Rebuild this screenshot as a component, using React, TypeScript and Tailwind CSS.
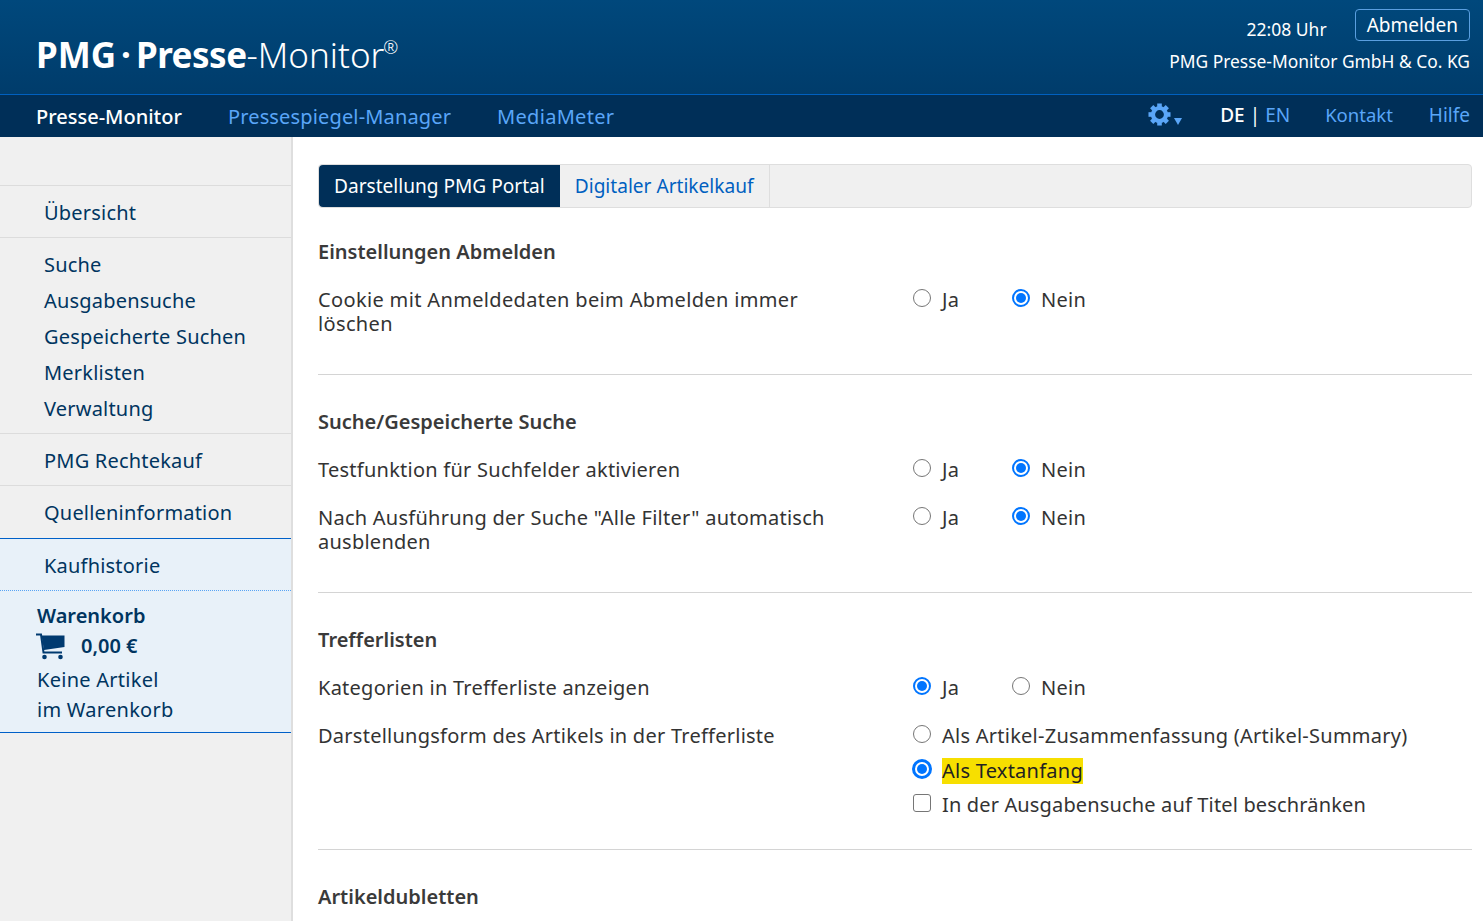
import React from 'react';

const Radio = ({ checked, focus, label, className = '' }: { checked?: boolean; focus?: boolean; label: React.ReactNode; className?: string }) => (
  <label className={`flex items-center gap-[11px] ${className}`}>
    <span
      className={`w-[18px] h-[18px] rounded-full bg-white flex items-center justify-center shrink-0 -mt-[5px] ${
        checked ? 'border-2 border-[#0075ff]' : 'border-[1.5px] border-[#767676]'
      } ${focus ? 'ring-1 ring-[#0075ff]' : ''}`}
    >
      {checked && <span className="block w-[10px] h-[10px] rounded-full bg-[#0075ff]" />}
    </span>
    <span className="tracking-[0.25px]">{label}</span>
  </label>
);

const YesNo = ({ yes }: { yes?: boolean }) => (
  <div className="flex">
    <Radio checked={yes} label="Ja" className="w-[99px]" />
    <Radio checked={!yes} label="Nein" />
  </div>
);

const Row = ({ label, children }: { label: React.ReactNode; children: React.ReactNode }) => (
  <div className="flex mt-6">
    <div className="w-[595px] pr-[60px] shrink-0 tracking-[0.25px]">{label}</div>
    <div className="flex-1">{children}</div>
  </div>
);

const Heading = ({ children }: { children: React.ReactNode }) => (
  <h2 className="font-semibold text-[#3a3a3a]">{children}</h2>
);

const GearIcon = () => (
  <svg width="23" height="23" viewBox="0 0 24 24" fill="currentColor">
    <circle cx="12" cy="12" r="6.8" fill="none" stroke="currentColor" strokeWidth="4.4" />
    {[0, 45, 90, 135, 180, 225, 270, 315].map((a) => (
      <rect key={a} x="9.6" y="0.5" width="4.8" height="5" transform={`rotate(${a} 12 12)`} />
    ))}
  </svg>
);

const CartIcon = () => (
  <svg width="30" height="27" viewBox="0 0 30 27" fill="#003a70">
    <path d="M0 1.5H5L7.5 19.5H26" fill="none" stroke="#003a70" strokeWidth="2" />
    <path d="M5.5 2.5H28.5V14L8 17Z" />
    <circle cx="8.5" cy="24" r="2.3" />
    <circle cx="24.5" cy="24" r="2.3" />
  </svg>
);

const sideLink = 'block pl-[44px] text-[#003560] tracking-[0.2px]';

export default function App() {
  return (
    <div className="min-h-[921px] h-[921px] overflow-hidden flex flex-col bg-white text-[20px] leading-6 text-[#333] font-['Noto_Sans',sans-serif]">
      <header className="h-[95px] shrink-0 bg-gradient-to-b from-[#00487c] to-[#003c6b] border-b border-[#0060c0] flex justify-between text-white">
        <div className="pl-[36px] pt-[33px] text-[35px] leading-[44px] flex items-start">
          <span className="font-bold">PMG</span>
          <span className="font-bold px-[5px]">·</span>
          <span className="font-bold tracking-[-0.5px]">Presse</span>
          <span className="font-light">-Monitor</span>
          <span className="text-[18px] leading-[28px] font-light -ml-[1px]">®</span>
        </div>
        <div className="pr-[13px] pt-[8px] flex flex-col items-end">
          <div className="flex items-center gap-[28px]">
            <span className="mt-[9px] text-[17.5px]">22:08 Uhr</span>
            <span className="border border-[#5a9fe0] rounded-[4px] h-[32px] px-[11px] flex items-center text-[19px]">Abmelden</span>
          </div>
          <div className="mt-[8px] text-[17.4px]">PMG Presse-Monitor GmbH &amp; Co. KG</div>
        </div>
      </header>

      <nav className="h-[42px] shrink-0 bg-[#002f58] flex items-center justify-between pl-[36px] pr-[13px] text-[#5aa6f8] pt-[1px]">
        <div className="flex gap-[46px]">
          <a className="text-white font-medium">Presse-Monitor</a>
          <a className="tracking-[0.15px]">Pressespiegel-Manager</a>
          <a className="tracking-[0.3px]">MediaMeter</a>
        </div>
        <div className="flex items-center text-[19px] -mt-[4px]">
          <span className="flex items-end mr-[38px]">
            <GearIcon />
            <span className="w-0 h-0 border-x-[4px] border-x-transparent border-t-[7px] border-t-[#5aa6f8] mb-[1px] ml-[3px]" />
          </span>
          <span className="text-white font-medium">DE</span>
          <span className="text-white mx-[5px]">|</span>
          <a>EN</a>
          <a className="ml-[35px] text-[18.5px]">Kontakt</a>
          <a className="ml-[36px]">Hilfe</a>
        </div>
      </nav>

      <div className="flex flex-1 min-h-0">
        <aside className="w-[293px] shrink-0 bg-[#f0f0f0] border-r-2 border-[#dedede] pt-[48px]">
          <div className="border-t border-[#dcdcdc] pt-[15px] pb-[12px]">
            <a className={sideLink}>Übersicht</a>
          </div>
          <div className="border-t border-[#dcdcdc] pt-[9px] pb-[6px]">
            {['Suche', 'Ausgabensuche', 'Gespeicherte Suchen', 'Merklisten', 'Verwaltung'].map((t) => (
              <a key={t} className={`${sideLink} h-9 leading-9`}>{t}</a>
            ))}
          </div>
          <div className="border-t border-[#dcdcdc] pt-[15px] pb-[12px]">
            <a className={sideLink}>PMG Rechtekauf</a>
          </div>
          <div className="border-t border-[#dcdcdc] pt-[15px] pb-[13px]">
            <a className={sideLink}>Quelleninformation</a>
          </div>
          <div className="bg-[#e8f1f9] border-t border-b border-[#0060c8] text-[#003560]">
            <div className="pt-[15px] pb-[12px] border-b border-dotted border-[#58a4f5]">
              <a className={sideLink}>Kaufhistorie</a>
            </div>
            <div className="pl-[37px] pt-[13px] pb-[7px]">
              <div className="font-semibold">Warenkorb</div>
              <div className="flex items-center h-[36px] font-semibold">
                <span className="-ml-[1px]"><CartIcon /></span>
                <span className="ml-[15px]">0,00 €</span>
              </div>
              <div className="leading-[30px] tracking-[0.27px] mt-[1px]">Keine Artikel<br />im Warenkorb</div>
            </div>
          </div>
        </aside>

        <main className="flex-1 min-w-0 pt-[27px] pl-[25px] pr-[11px]">
          <div className="h-[44px] flex bg-[#f0f0f0] border border-[#dedede] rounded-[4px] text-[19.1px]">
            <div className="bg-[#002f58] text-white rounded-l-[4px] px-[15px] flex items-center">Darstellung PMG Portal</div>
            <div className="text-[#0060c0] px-[15px] flex items-center border-r border-[#dedede]">Digitaler Artikelkauf</div>
          </div>

          <section className="pt-[32px] pb-[38px] border-b border-[#d4d4d4]">
            <Heading>Einstellungen Abmelden</Heading>
            <Row label={<span className="tracking-[0.35px]">Cookie mit Anmeldedaten beim Abmelden immer löschen</span>}><YesNo /></Row>
          </section>

          <section className="pt-[35px] pb-[38px] border-b border-[#d4d4d4]">
            <Heading>Suche/Gespeicherte Suche</Heading>
            <Row label="Testfunktion für Suchfelder aktivieren"><YesNo /></Row>
            <Row label={'Nach Ausführung der Suche "Alle Filter" automatisch ausblenden'}><YesNo /></Row>
          </section>

          <section className="pt-[35px] pb-[32px] border-b border-[#d4d4d4]">
            <Heading>Trefferlisten</Heading>
            <Row label="Kategorien in Trefferliste anzeigen"><YesNo yes /></Row>
            <Row label="Darstellungsform des Artikels in der Trefferliste">
              <Radio label="Als Artikel-Zusammenfassung (Artikel-Summary)" />
              <Radio checked focus label={<span className="bg-[#f7df00] text-[#222] inline-block py-[1px]">Als Textanfang</span>} className="mt-[10px]" />
              <label className="flex items-center gap-[11px] mt-[9px]">
                <span className="w-[18px] h-[18px] rounded-[3px] bg-white border-[1.5px] border-[#767676] -mt-[5px] shrink-0" />
                <span className="tracking-[0.15px]">In der Ausgabensuche auf Titel beschränken</span>
              </label>
            </Row>
          </section>

          <section className="pt-[35px]">
            <Heading>Artikeldubletten</Heading>
          </section>
        </main>
      </div>
    </div>
  );
}
